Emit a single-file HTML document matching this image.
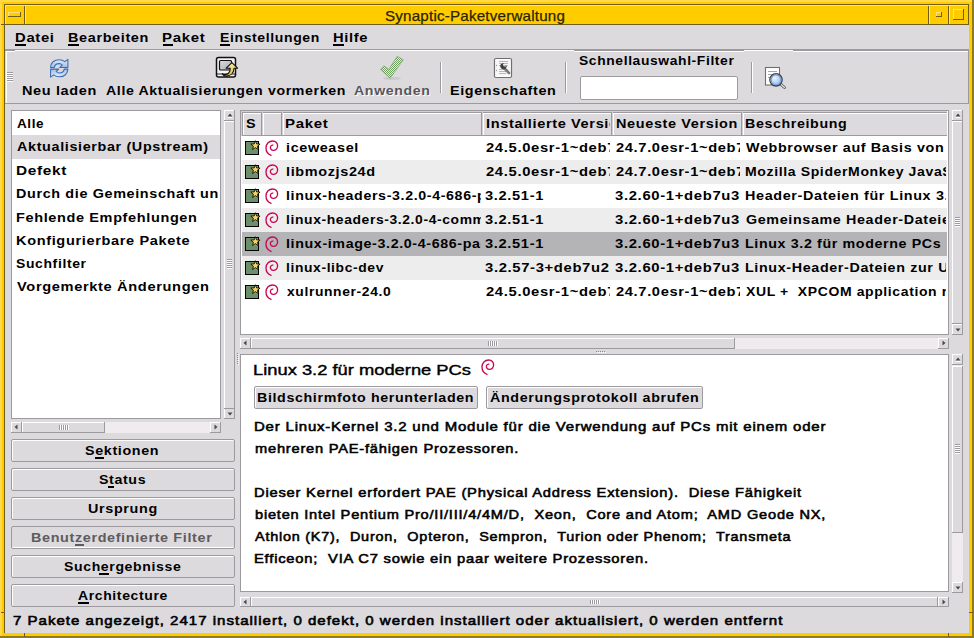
<!DOCTYPE html>
<html><head><meta charset="utf-8"><style>
html,body{margin:0;padding:0;width:974px;height:638px;overflow:hidden;background:#dcdadd}
body div{position:absolute;white-space:pre;line-height:normal}
body svg{position:absolute}
</style></head><body>
<div style="left:0px;top:0px;width:974px;height:638px;background:#ffd84f"></div>
<div style="left:2px;top:2px;width:970px;height:634px;background:#ffcc00"></div>
<div style="left:972px;top:0px;width:2px;height:638px;background:#8e7a22"></div>
<div style="left:0px;top:636px;width:974px;height:2px;background:#8e7a22"></div>
<div style="left:0px;top:0px;width:2px;height:636px;background:#ffd84f"></div>
<div style="left:4px;top:4px;width:965px;height:1px;background:#6f5e1c"></div>
<div style="left:4px;top:4px;width:1px;height:629px;background:#6f5e1c"></div>
<div style="left:5px;top:5px;width:964px;height:19px;background:#ffcc00"></div>
<div style="left:5px;top:5px;width:964px;height:1px;background:#ffe27a"></div>
<div style="left:5px;top:5px;width:1px;height:19px;background:#ffe27a"></div>
<div style="left:1px;top:24px;width:968px;height:1px;background:#6f5e1c"></div>
<div style="left:24px;top:6px;width:1px;height:18px;background:#6f5e1c"></div>
<div style="left:25px;top:6px;width:1px;height:18px;background:#ffe27a"></div>
<div style="left:8px;top:12px;width:13px;height:1px;background:#ffe27a"></div>
<div style="left:8px;top:12px;width:1px;height:5px;background:#ffe27a"></div>
<div style="left:8px;top:16px;width:13px;height:1px;background:#6f5e1c"></div>
<div style="left:20px;top:12px;width:1px;height:5px;background:#6f5e1c"></div>
<div style="left:928px;top:6px;width:1px;height:18px;background:#6f5e1c"></div>
<div style="left:929px;top:6px;width:1px;height:18px;background:#ffe27a"></div>
<div style="left:948px;top:6px;width:1px;height:18px;background:#6f5e1c"></div>
<div style="left:949px;top:6px;width:1px;height:18px;background:#ffe27a"></div>
<div style="left:968px;top:5px;width:1px;height:19px;background:#6f5e1c"></div>
<div style="left:936px;top:12px;width:6px;height:1px;background:#ffe27a"></div>
<div style="left:936px;top:12px;width:1px;height:5px;background:#ffe27a"></div>
<div style="left:936px;top:16px;width:6px;height:1px;background:#6f5e1c"></div>
<div style="left:941px;top:12px;width:1px;height:5px;background:#6f5e1c"></div>
<div style="left:953px;top:9px;width:11px;height:1px;background:#ffe27a"></div>
<div style="left:953px;top:9px;width:1px;height:11px;background:#ffe27a"></div>
<div style="left:953px;top:19px;width:11px;height:1px;background:#6f5e1c"></div>
<div style="left:963px;top:9px;width:1px;height:11px;background:#6f5e1c"></div>
<div style="left:1px;top:612px;width:4px;height:1px;background:#6f5e1c"></div>
<div style="left:969px;top:612px;width:4px;height:1px;background:#6f5e1c"></div>
<div style="left:24px;top:633px;width:1px;height:4px;background:#6f5e1c"></div>
<div style="left:948px;top:633px;width:1px;height:4px;background:#6f5e1c"></div>
<div style="left:5px;top:25px;width:964px;height:608px;background:#dcdadd"></div>
<div style="left:5px;top:49px;width:964px;height:1px;background:#9c9a9f"></div>
<div style="left:15px;top:44px;width:11px;height:2px;background:#000"></div>
<div style="left:68px;top:44px;width:11px;height:2px;background:#000"></div>
<div style="left:163px;top:44px;width:10px;height:2px;background:#000"></div>
<div style="left:220px;top:44px;width:10px;height:2px;background:#000"></div>
<div style="left:333px;top:44px;width:11px;height:2px;background:#000"></div>
<div style="left:5px;top:50px;width:964px;height:1px;background:#9c9a9f"></div>
<div style="left:15px;top:50px;width:559px;height:1px;background:#ffffff"></div>
<div style="left:744px;top:50px;width:49px;height:1px;background:#ffffff"></div>
<div style="left:6px;top:51px;width:9px;height:1px;background:#ffffff"></div>
<div style="left:574px;top:51px;width:170px;height:1px;background:#ffffff"></div>
<div style="left:793px;top:51px;width:175px;height:1px;background:#ffffff"></div>
<div style="left:6px;top:51px;width:1px;height:52px;background:#ffffff"></div>
<div style="left:968px;top:50px;width:1px;height:54px;background:#9c9a9f"></div>
<div style="left:5px;top:103px;width:964px;height:1px;background:#9c9a9f"></div>
<div style="left:7px;top:72px;width:6px;height:1px;background:#9c9a9f"></div>
<div style="left:7px;top:73px;width:6px;height:1px;background:#ffffff"></div>
<div style="left:7px;top:74px;width:6px;height:1px;background:#9c9a9f"></div>
<div style="left:7px;top:75px;width:6px;height:1px;background:#ffffff"></div>
<div style="left:7px;top:76px;width:6px;height:1px;background:#9c9a9f"></div>
<div style="left:7px;top:77px;width:6px;height:1px;background:#ffffff"></div>
<div style="left:7px;top:78px;width:6px;height:1px;background:#9c9a9f"></div>
<div style="left:7px;top:79px;width:6px;height:1px;background:#ffffff"></div>
<div style="left:7px;top:80px;width:6px;height:1px;background:#9c9a9f"></div>
<div style="left:7px;top:81px;width:6px;height:1px;background:#ffffff"></div>
<div style="left:440px;top:62px;width:1px;height:31px;background:#9c9a9f"></div>
<div style="left:441px;top:62px;width:1px;height:31px;background:#ffffff"></div>
<div style="left:565px;top:62px;width:1px;height:31px;background:#9c9a9f"></div>
<div style="left:566px;top:62px;width:1px;height:31px;background:#ffffff"></div>
<div style="left:751px;top:62px;width:1px;height:31px;background:#9c9a9f"></div>
<div style="left:752px;top:62px;width:1px;height:31px;background:#ffffff"></div>
<div style="left:580px;top:76px;width:158px;height:24px;background:#fff;border:1px solid #9c9a9f;box-sizing:border-box;border-radius:2px"></div>
<div style="left:11px;top:110px;width:210px;height:309px;background:#9c9a9f"></div>
<div style="left:12px;top:111px;width:208px;height:307px;background:#fff"></div>
<div style="left:12px;top:135px;width:208px;height:24px;background:#dcdadd"></div>
<div style="left:224px;top:110px;width:11px;height:309px;background:#efebef"></div>
<div style="left:224px;top:110px;width:11px;height:11px;background:#dcdadd"></div>
<div style="left:224px;top:110px;width:11px;height:1px;background:#ffffff"></div>
<div style="left:224px;top:110px;width:1px;height:11px;background:#ffffff"></div>
<div style="left:234px;top:110px;width:1px;height:11px;background:#9c9a9f"></div>
<div style="left:224px;top:120px;width:11px;height:1px;background:#9c9a9f"></div>
<svg style="left:227px;top:113px" width="7" height="5"><polygon points="0.5,3.5 5.5,3.5 3,0.5" fill="#4a484c"/><line x1="0.5" y1="4.5" x2="5.5" y2="4.5" stroke="#fff" stroke-width="1"/></svg>
<div style="left:224px;top:408px;width:11px;height:11px;background:#dcdadd"></div>
<div style="left:224px;top:408px;width:11px;height:1px;background:#ffffff"></div>
<div style="left:224px;top:408px;width:1px;height:11px;background:#ffffff"></div>
<div style="left:234px;top:408px;width:1px;height:11px;background:#9c9a9f"></div>
<div style="left:224px;top:418px;width:11px;height:1px;background:#9c9a9f"></div>
<svg style="left:227px;top:412px" width="7" height="5"><polygon points="0.5,0.5 5.5,0.5 3,3.5" fill="#4a484c"/></svg>
<div style="left:224px;top:121px;width:11px;height:288px;background:#dcdadd"></div>
<div style="left:224px;top:121px;width:11px;height:1px;background:#ffffff"></div>
<div style="left:224px;top:121px;width:1px;height:288px;background:#ffffff"></div>
<div style="left:234px;top:121px;width:1px;height:288px;background:#9c9a9f"></div>
<div style="left:224px;top:408px;width:11px;height:1px;background:#9c9a9f"></div>
<div style="left:227px;top:259px;width:5px;height:1px;background:#9c9a9f"></div>
<div style="left:227px;top:260px;width:5px;height:1px;background:#ffffff"></div>
<div style="left:227px;top:261px;width:5px;height:1px;background:#9c9a9f"></div>
<div style="left:227px;top:262px;width:5px;height:1px;background:#ffffff"></div>
<div style="left:227px;top:263px;width:5px;height:1px;background:#9c9a9f"></div>
<div style="left:227px;top:264px;width:5px;height:1px;background:#ffffff"></div>
<div style="left:227px;top:265px;width:5px;height:1px;background:#9c9a9f"></div>
<div style="left:227px;top:266px;width:5px;height:1px;background:#ffffff"></div>
<div style="left:227px;top:267px;width:5px;height:1px;background:#9c9a9f"></div>
<div style="left:227px;top:268px;width:5px;height:1px;background:#ffffff"></div>
<div style="left:11px;top:422px;width:210px;height:11px;background:#efebef"></div>
<div style="left:11px;top:422px;width:11px;height:11px;background:#dcdadd"></div>
<div style="left:11px;top:422px;width:11px;height:1px;background:#ffffff"></div>
<div style="left:11px;top:422px;width:1px;height:11px;background:#ffffff"></div>
<div style="left:21px;top:422px;width:1px;height:11px;background:#9c9a9f"></div>
<div style="left:11px;top:432px;width:11px;height:1px;background:#9c9a9f"></div>
<svg style="left:14px;top:424px" width="5" height="7"><polygon points="3.5,0.5 3.5,5.5 0.5,3" fill="#4a484c"/></svg>
<div style="left:210px;top:422px;width:11px;height:11px;background:#dcdadd"></div>
<div style="left:210px;top:422px;width:11px;height:1px;background:#ffffff"></div>
<div style="left:210px;top:422px;width:1px;height:11px;background:#ffffff"></div>
<div style="left:220px;top:422px;width:1px;height:11px;background:#9c9a9f"></div>
<div style="left:210px;top:432px;width:11px;height:1px;background:#9c9a9f"></div>
<svg style="left:214px;top:424px" width="5" height="7"><polygon points="0.5,0.5 0.5,5.5 3.5,3" fill="#4a484c"/></svg>
<div style="left:22px;top:422px;width:83px;height:11px;background:#dcdadd"></div>
<div style="left:22px;top:422px;width:83px;height:1px;background:#ffffff"></div>
<div style="left:22px;top:422px;width:1px;height:11px;background:#ffffff"></div>
<div style="left:104px;top:422px;width:1px;height:11px;background:#9c9a9f"></div>
<div style="left:22px;top:432px;width:83px;height:1px;background:#9c9a9f"></div>
<div style="left:59px;top:425px;width:1px;height:5px;background:#9c9a9f"></div>
<div style="left:60px;top:425px;width:1px;height:5px;background:#ffffff"></div>
<div style="left:61px;top:425px;width:1px;height:5px;background:#9c9a9f"></div>
<div style="left:62px;top:425px;width:1px;height:5px;background:#ffffff"></div>
<div style="left:63px;top:425px;width:1px;height:5px;background:#9c9a9f"></div>
<div style="left:64px;top:425px;width:1px;height:5px;background:#ffffff"></div>
<div style="left:65px;top:425px;width:1px;height:5px;background:#9c9a9f"></div>
<div style="left:66px;top:425px;width:1px;height:5px;background:#ffffff"></div>
<div style="left:67px;top:425px;width:1px;height:5px;background:#9c9a9f"></div>
<div style="left:68px;top:425px;width:1px;height:5px;background:#ffffff"></div>
<div style="left:237px;top:353px;width:1px;height:1px;background:#8a888c"></div>
<div style="left:238px;top:354px;width:1px;height:1px;background:#ffffff"></div>
<div style="left:237px;top:355px;width:1px;height:1px;background:#8a888c"></div>
<div style="left:238px;top:356px;width:1px;height:1px;background:#ffffff"></div>
<div style="left:237px;top:357px;width:1px;height:1px;background:#8a888c"></div>
<div style="left:238px;top:358px;width:1px;height:1px;background:#ffffff"></div>
<div style="left:237px;top:359px;width:1px;height:1px;background:#8a888c"></div>
<div style="left:238px;top:360px;width:1px;height:1px;background:#ffffff"></div>
<div style="left:237px;top:361px;width:1px;height:1px;background:#8a888c"></div>
<div style="left:238px;top:362px;width:1px;height:1px;background:#ffffff"></div>
<div style="left:237px;top:363px;width:1px;height:1px;background:#8a888c"></div>
<div style="left:238px;top:364px;width:1px;height:1px;background:#ffffff"></div>
<div style="left:240px;top:110px;width:709px;height:225px;background:#9c9a9f"></div>
<div style="left:241px;top:111px;width:707px;height:223px;background:#fff"></div>
<div style="left:241px;top:111px;width:707px;height:1px;background:#d2d0d4"></div>
<div style="left:241px;top:111px;width:1px;height:25px;background:#d2d0d4"></div>
<div style="left:947px;top:111px;width:1px;height:223px;background:#ffffff"></div>
<div style="left:242px;top:112px;width:20px;height:24px;background:#dcdadd"></div>
<div style="left:242px;top:112px;width:20px;height:1px;background:#9c9a9f"></div>
<div style="left:242px;top:113px;width:20px;height:1px;background:#ffffff"></div>
<div style="left:242px;top:112px;width:1px;height:24px;background:#9c9a9f"></div>
<div style="left:243px;top:113px;width:1px;height:22px;background:#ffffff"></div>
<div style="left:261px;top:112px;width:1px;height:24px;background:#9c9a9f"></div>
<div style="left:242px;top:135px;width:20px;height:1px;background:#9c9a9f"></div>
<div style="left:262px;top:112px;width:20px;height:24px;background:#dcdadd"></div>
<div style="left:262px;top:112px;width:20px;height:1px;background:#9c9a9f"></div>
<div style="left:262px;top:113px;width:20px;height:1px;background:#ffffff"></div>
<div style="left:262px;top:112px;width:1px;height:24px;background:#d2d0d4"></div>
<div style="left:263px;top:113px;width:1px;height:22px;background:#ffffff"></div>
<div style="left:281px;top:112px;width:1px;height:24px;background:#9c9a9f"></div>
<div style="left:262px;top:135px;width:20px;height:1px;background:#9c9a9f"></div>
<div style="left:282px;top:112px;width:200px;height:24px;background:#dcdadd"></div>
<div style="left:282px;top:112px;width:200px;height:1px;background:#9c9a9f"></div>
<div style="left:282px;top:113px;width:200px;height:1px;background:#ffffff"></div>
<div style="left:282px;top:112px;width:1px;height:24px;background:#d2d0d4"></div>
<div style="left:283px;top:113px;width:1px;height:22px;background:#ffffff"></div>
<div style="left:481px;top:112px;width:1px;height:24px;background:#9c9a9f"></div>
<div style="left:282px;top:135px;width:200px;height:1px;background:#9c9a9f"></div>
<div style="left:482px;top:112px;width:130px;height:24px;background:#dcdadd"></div>
<div style="left:482px;top:112px;width:130px;height:1px;background:#9c9a9f"></div>
<div style="left:482px;top:113px;width:130px;height:1px;background:#ffffff"></div>
<div style="left:482px;top:112px;width:1px;height:24px;background:#d2d0d4"></div>
<div style="left:483px;top:113px;width:1px;height:22px;background:#ffffff"></div>
<div style="left:611px;top:112px;width:1px;height:24px;background:#9c9a9f"></div>
<div style="left:482px;top:135px;width:130px;height:1px;background:#9c9a9f"></div>
<div style="left:612px;top:112px;width:130px;height:24px;background:#dcdadd"></div>
<div style="left:612px;top:112px;width:130px;height:1px;background:#9c9a9f"></div>
<div style="left:612px;top:113px;width:130px;height:1px;background:#ffffff"></div>
<div style="left:612px;top:112px;width:1px;height:24px;background:#d2d0d4"></div>
<div style="left:613px;top:113px;width:1px;height:22px;background:#ffffff"></div>
<div style="left:741px;top:112px;width:1px;height:24px;background:#9c9a9f"></div>
<div style="left:612px;top:135px;width:130px;height:1px;background:#9c9a9f"></div>
<div style="left:742px;top:112px;width:205px;height:24px;background:#dcdadd"></div>
<div style="left:742px;top:112px;width:205px;height:1px;background:#9c9a9f"></div>
<div style="left:742px;top:113px;width:205px;height:1px;background:#ffffff"></div>
<div style="left:742px;top:112px;width:1px;height:24px;background:#d2d0d4"></div>
<div style="left:743px;top:113px;width:1px;height:22px;background:#ffffff"></div>
<div style="left:742px;top:135px;width:205px;height:1px;background:#9c9a9f"></div>
<svg style="left:245px;top:140px" width="17" height="16" viewBox="0 -1 17 16"><rect x="0.5" y="0.5" width="13" height="13" fill="#7fa27b" stroke="#000" stroke-width="1"/><path d="M1,1 L9,1 L9,9 L13,9 L13,13 L1,13 Z" fill="#6b8f67"/><polygon points="10.40,-0.30 11.63,2.90 15.06,3.09 12.40,5.25 13.28,8.56 10.40,6.70 7.52,8.56 8.40,5.25 5.74,3.09 9.17,2.90" fill="#f2d55c" stroke="#111" stroke-width="0.9" stroke-linejoin="round"/></svg>
<svg style="left:265px;top:140px" width="14" height="17"><path d="M6.5,15.6 C2.5,14.2 0.9,11 1.0,7.8 C1.2,3.6 4.2,1.0 7.6,1.0 C10.8,1.0 12.8,3.4 12.6,6.2 C12.4,9.0 10.2,10.6 8.2,10.4 C6.4,10.2 5.2,8.8 5.4,7.2 C5.6,5.6 7.0,4.8 8.4,5.2" fill="none" stroke="#c70a50" stroke-width="1.35"/></svg>
<div style="left:242px;top:160px;width:705px;height:24px;background:#ededed"></div>
<svg style="left:245px;top:164px" width="17" height="16" viewBox="0 -1 17 16"><rect x="0.5" y="0.5" width="13" height="13" fill="#7fa27b" stroke="#000" stroke-width="1"/><path d="M1,1 L9,1 L9,9 L13,9 L13,13 L1,13 Z" fill="#6b8f67"/><polygon points="10.40,-0.30 11.63,2.90 15.06,3.09 12.40,5.25 13.28,8.56 10.40,6.70 7.52,8.56 8.40,5.25 5.74,3.09 9.17,2.90" fill="#f2d55c" stroke="#111" stroke-width="0.9" stroke-linejoin="round"/></svg>
<svg style="left:265px;top:164px" width="14" height="17"><path d="M6.5,15.6 C2.5,14.2 0.9,11 1.0,7.8 C1.2,3.6 4.2,1.0 7.6,1.0 C10.8,1.0 12.8,3.4 12.6,6.2 C12.4,9.0 10.2,10.6 8.2,10.4 C6.4,10.2 5.2,8.8 5.4,7.2 C5.6,5.6 7.0,4.8 8.4,5.2" fill="none" stroke="#c70a50" stroke-width="1.35"/></svg>
<svg style="left:245px;top:188px" width="17" height="16" viewBox="0 -1 17 16"><rect x="0.5" y="0.5" width="13" height="13" fill="#7fa27b" stroke="#000" stroke-width="1"/><path d="M1,1 L9,1 L9,9 L13,9 L13,13 L1,13 Z" fill="#6b8f67"/><polygon points="10.40,-0.30 11.63,2.90 15.06,3.09 12.40,5.25 13.28,8.56 10.40,6.70 7.52,8.56 8.40,5.25 5.74,3.09 9.17,2.90" fill="#f2d55c" stroke="#111" stroke-width="0.9" stroke-linejoin="round"/></svg>
<svg style="left:265px;top:188px" width="14" height="17"><path d="M6.5,15.6 C2.5,14.2 0.9,11 1.0,7.8 C1.2,3.6 4.2,1.0 7.6,1.0 C10.8,1.0 12.8,3.4 12.6,6.2 C12.4,9.0 10.2,10.6 8.2,10.4 C6.4,10.2 5.2,8.8 5.4,7.2 C5.6,5.6 7.0,4.8 8.4,5.2" fill="none" stroke="#c70a50" stroke-width="1.35"/></svg>
<div style="left:242px;top:208px;width:705px;height:24px;background:#ededed"></div>
<svg style="left:245px;top:212px" width="17" height="16" viewBox="0 -1 17 16"><rect x="0.5" y="0.5" width="13" height="13" fill="#7fa27b" stroke="#000" stroke-width="1"/><path d="M1,1 L9,1 L9,9 L13,9 L13,13 L1,13 Z" fill="#6b8f67"/><polygon points="10.40,-0.30 11.63,2.90 15.06,3.09 12.40,5.25 13.28,8.56 10.40,6.70 7.52,8.56 8.40,5.25 5.74,3.09 9.17,2.90" fill="#f2d55c" stroke="#111" stroke-width="0.9" stroke-linejoin="round"/></svg>
<svg style="left:265px;top:212px" width="14" height="17"><path d="M6.5,15.6 C2.5,14.2 0.9,11 1.0,7.8 C1.2,3.6 4.2,1.0 7.6,1.0 C10.8,1.0 12.8,3.4 12.6,6.2 C12.4,9.0 10.2,10.6 8.2,10.4 C6.4,10.2 5.2,8.8 5.4,7.2 C5.6,5.6 7.0,4.8 8.4,5.2" fill="none" stroke="#c70a50" stroke-width="1.35"/></svg>
<div style="left:242px;top:232px;width:705px;height:24px;background:#b4b3b6"></div>
<svg style="left:245px;top:236px" width="17" height="16" viewBox="0 -1 17 16"><rect x="0.5" y="0.5" width="13" height="13" fill="#7fa27b" stroke="#000" stroke-width="1"/><path d="M1,1 L9,1 L9,9 L13,9 L13,13 L1,13 Z" fill="#6b8f67"/><polygon points="10.40,-0.30 11.63,2.90 15.06,3.09 12.40,5.25 13.28,8.56 10.40,6.70 7.52,8.56 8.40,5.25 5.74,3.09 9.17,2.90" fill="#f2d55c" stroke="#111" stroke-width="0.9" stroke-linejoin="round"/></svg>
<svg style="left:265px;top:236px" width="14" height="17"><path d="M6.5,15.6 C2.5,14.2 0.9,11 1.0,7.8 C1.2,3.6 4.2,1.0 7.6,1.0 C10.8,1.0 12.8,3.4 12.6,6.2 C12.4,9.0 10.2,10.6 8.2,10.4 C6.4,10.2 5.2,8.8 5.4,7.2 C5.6,5.6 7.0,4.8 8.4,5.2" fill="none" stroke="#c70a50" stroke-width="1.35"/></svg>
<div style="left:242px;top:256px;width:705px;height:24px;background:#ededed"></div>
<svg style="left:245px;top:260px" width="17" height="16" viewBox="0 -1 17 16"><rect x="0.5" y="0.5" width="13" height="13" fill="#7fa27b" stroke="#000" stroke-width="1"/><path d="M1,1 L9,1 L9,9 L13,9 L13,13 L1,13 Z" fill="#6b8f67"/><polygon points="10.40,-0.30 11.63,2.90 15.06,3.09 12.40,5.25 13.28,8.56 10.40,6.70 7.52,8.56 8.40,5.25 5.74,3.09 9.17,2.90" fill="#f2d55c" stroke="#111" stroke-width="0.9" stroke-linejoin="round"/></svg>
<svg style="left:265px;top:260px" width="14" height="17"><path d="M6.5,15.6 C2.5,14.2 0.9,11 1.0,7.8 C1.2,3.6 4.2,1.0 7.6,1.0 C10.8,1.0 12.8,3.4 12.6,6.2 C12.4,9.0 10.2,10.6 8.2,10.4 C6.4,10.2 5.2,8.8 5.4,7.2 C5.6,5.6 7.0,4.8 8.4,5.2" fill="none" stroke="#c70a50" stroke-width="1.35"/></svg>
<svg style="left:245px;top:284px" width="17" height="16" viewBox="0 -1 17 16"><rect x="0.5" y="0.5" width="13" height="13" fill="#7fa27b" stroke="#000" stroke-width="1"/><path d="M1,1 L9,1 L9,9 L13,9 L13,13 L1,13 Z" fill="#6b8f67"/><polygon points="10.40,-0.30 11.63,2.90 15.06,3.09 12.40,5.25 13.28,8.56 10.40,6.70 7.52,8.56 8.40,5.25 5.74,3.09 9.17,2.90" fill="#f2d55c" stroke="#111" stroke-width="0.9" stroke-linejoin="round"/></svg>
<svg style="left:265px;top:284px" width="14" height="17"><path d="M6.5,15.6 C2.5,14.2 0.9,11 1.0,7.8 C1.2,3.6 4.2,1.0 7.6,1.0 C10.8,1.0 12.8,3.4 12.6,6.2 C12.4,9.0 10.2,10.6 8.2,10.4 C6.4,10.2 5.2,8.8 5.4,7.2 C5.6,5.6 7.0,4.8 8.4,5.2" fill="none" stroke="#c70a50" stroke-width="1.35"/></svg>
<div style="left:952px;top:110px;width:11px;height:225px;background:#efebef"></div>
<div style="left:952px;top:110px;width:11px;height:11px;background:#dcdadd"></div>
<div style="left:952px;top:110px;width:11px;height:1px;background:#ffffff"></div>
<div style="left:952px;top:110px;width:1px;height:11px;background:#ffffff"></div>
<div style="left:962px;top:110px;width:1px;height:11px;background:#9c9a9f"></div>
<div style="left:952px;top:120px;width:11px;height:1px;background:#9c9a9f"></div>
<svg style="left:955px;top:113px" width="7" height="5"><polygon points="0.5,3.5 5.5,3.5 3,0.5" fill="#4a484c"/><line x1="0.5" y1="4.5" x2="5.5" y2="4.5" stroke="#fff" stroke-width="1"/></svg>
<div style="left:952px;top:324px;width:11px;height:11px;background:#dcdadd"></div>
<div style="left:952px;top:324px;width:11px;height:1px;background:#ffffff"></div>
<div style="left:952px;top:324px;width:1px;height:11px;background:#ffffff"></div>
<div style="left:962px;top:324px;width:1px;height:11px;background:#9c9a9f"></div>
<div style="left:952px;top:334px;width:11px;height:1px;background:#9c9a9f"></div>
<svg style="left:955px;top:328px" width="7" height="5"><polygon points="0.5,0.5 5.5,0.5 3,3.5" fill="#4a484c"/></svg>
<div style="left:952px;top:121px;width:11px;height:203px;background:#dcdadd"></div>
<div style="left:952px;top:121px;width:11px;height:1px;background:#ffffff"></div>
<div style="left:952px;top:121px;width:1px;height:203px;background:#ffffff"></div>
<div style="left:962px;top:121px;width:1px;height:203px;background:#9c9a9f"></div>
<div style="left:952px;top:323px;width:11px;height:1px;background:#9c9a9f"></div>
<div style="left:955px;top:217px;width:5px;height:1px;background:#9c9a9f"></div>
<div style="left:955px;top:218px;width:5px;height:1px;background:#ffffff"></div>
<div style="left:955px;top:219px;width:5px;height:1px;background:#9c9a9f"></div>
<div style="left:955px;top:220px;width:5px;height:1px;background:#ffffff"></div>
<div style="left:955px;top:221px;width:5px;height:1px;background:#9c9a9f"></div>
<div style="left:955px;top:222px;width:5px;height:1px;background:#ffffff"></div>
<div style="left:955px;top:223px;width:5px;height:1px;background:#9c9a9f"></div>
<div style="left:955px;top:224px;width:5px;height:1px;background:#ffffff"></div>
<div style="left:955px;top:225px;width:5px;height:1px;background:#9c9a9f"></div>
<div style="left:955px;top:226px;width:5px;height:1px;background:#ffffff"></div>
<div style="left:240px;top:338px;width:709px;height:11px;background:#efebef"></div>
<div style="left:240px;top:338px;width:11px;height:11px;background:#dcdadd"></div>
<div style="left:240px;top:338px;width:11px;height:1px;background:#ffffff"></div>
<div style="left:240px;top:338px;width:1px;height:11px;background:#ffffff"></div>
<div style="left:250px;top:338px;width:1px;height:11px;background:#9c9a9f"></div>
<div style="left:240px;top:348px;width:11px;height:1px;background:#9c9a9f"></div>
<svg style="left:243px;top:340px" width="5" height="7"><polygon points="3.5,0.5 3.5,5.5 0.5,3" fill="#4a484c"/></svg>
<div style="left:938px;top:338px;width:11px;height:11px;background:#dcdadd"></div>
<div style="left:938px;top:338px;width:11px;height:1px;background:#ffffff"></div>
<div style="left:938px;top:338px;width:1px;height:11px;background:#ffffff"></div>
<div style="left:948px;top:338px;width:1px;height:11px;background:#9c9a9f"></div>
<div style="left:938px;top:348px;width:11px;height:1px;background:#9c9a9f"></div>
<svg style="left:942px;top:340px" width="5" height="7"><polygon points="0.5,0.5 0.5,5.5 3.5,3" fill="#4a484c"/></svg>
<div style="left:251px;top:338px;width:484px;height:11px;background:#dcdadd"></div>
<div style="left:251px;top:338px;width:484px;height:1px;background:#ffffff"></div>
<div style="left:251px;top:338px;width:1px;height:11px;background:#ffffff"></div>
<div style="left:734px;top:338px;width:1px;height:11px;background:#9c9a9f"></div>
<div style="left:251px;top:348px;width:484px;height:1px;background:#9c9a9f"></div>
<div style="left:488px;top:341px;width:1px;height:5px;background:#9c9a9f"></div>
<div style="left:489px;top:341px;width:1px;height:5px;background:#ffffff"></div>
<div style="left:490px;top:341px;width:1px;height:5px;background:#9c9a9f"></div>
<div style="left:491px;top:341px;width:1px;height:5px;background:#ffffff"></div>
<div style="left:492px;top:341px;width:1px;height:5px;background:#9c9a9f"></div>
<div style="left:493px;top:341px;width:1px;height:5px;background:#ffffff"></div>
<div style="left:494px;top:341px;width:1px;height:5px;background:#9c9a9f"></div>
<div style="left:495px;top:341px;width:1px;height:5px;background:#ffffff"></div>
<div style="left:496px;top:341px;width:1px;height:5px;background:#9c9a9f"></div>
<div style="left:497px;top:341px;width:1px;height:5px;background:#ffffff"></div>
<div style="left:596px;top:351px;width:1px;height:1px;background:#8a888c"></div>
<div style="left:597px;top:352px;width:1px;height:1px;background:#ffffff"></div>
<div style="left:598px;top:351px;width:1px;height:1px;background:#8a888c"></div>
<div style="left:599px;top:352px;width:1px;height:1px;background:#ffffff"></div>
<div style="left:600px;top:351px;width:1px;height:1px;background:#8a888c"></div>
<div style="left:601px;top:352px;width:1px;height:1px;background:#ffffff"></div>
<div style="left:602px;top:351px;width:1px;height:1px;background:#8a888c"></div>
<div style="left:603px;top:352px;width:1px;height:1px;background:#ffffff"></div>
<div style="left:604px;top:351px;width:1px;height:1px;background:#8a888c"></div>
<div style="left:605px;top:352px;width:1px;height:1px;background:#ffffff"></div>
<div style="left:240px;top:354px;width:709px;height:238px;background:#9c9a9f"></div>
<div style="left:241px;top:355px;width:707px;height:236px;background:#fff"></div>
<svg style="left:481px;top:359px" width="16" height="17"><path d="M6.5,15.6 C2.5,14.2 0.9,11 1.0,7.8 C1.2,3.6 4.2,1.0 7.6,1.0 C10.8,1.0 12.8,3.4 12.6,6.2 C12.4,9.0 10.2,10.6 8.2,10.4 C6.4,10.2 5.2,8.8 5.4,7.2 C5.6,5.6 7.0,4.8 8.4,5.2" fill="none" stroke="#c70a50" stroke-width="1.35"/></svg>
<div style="left:254px;top:386px;width:224px;height:23px;background:#dcdadd;border:1px solid #9c9a9f;box-sizing:border-box;border-radius:2px;box-shadow:inset 1px 1px 0 #fff"></div>
<div style="left:486px;top:386px;width:217px;height:23px;background:#dcdadd;border:1px solid #9c9a9f;box-sizing:border-box;border-radius:2px;box-shadow:inset 1px 1px 0 #fff"></div>
<div style="left:952px;top:354px;width:11px;height:239px;background:#efebef"></div>
<div style="left:952px;top:354px;width:11px;height:11px;background:#dcdadd"></div>
<div style="left:952px;top:354px;width:11px;height:1px;background:#ffffff"></div>
<div style="left:952px;top:354px;width:1px;height:11px;background:#ffffff"></div>
<div style="left:962px;top:354px;width:1px;height:11px;background:#9c9a9f"></div>
<div style="left:952px;top:364px;width:11px;height:1px;background:#9c9a9f"></div>
<svg style="left:955px;top:357px" width="7" height="5"><polygon points="0.5,3.5 5.5,3.5 3,0.5" fill="#4a484c"/><line x1="0.5" y1="4.5" x2="5.5" y2="4.5" stroke="#fff" stroke-width="1"/></svg>
<div style="left:952px;top:582px;width:11px;height:11px;background:#dcdadd"></div>
<div style="left:952px;top:582px;width:11px;height:1px;background:#ffffff"></div>
<div style="left:952px;top:582px;width:1px;height:11px;background:#ffffff"></div>
<div style="left:962px;top:582px;width:1px;height:11px;background:#9c9a9f"></div>
<div style="left:952px;top:592px;width:11px;height:1px;background:#9c9a9f"></div>
<svg style="left:955px;top:586px" width="7" height="5"><polygon points="0.5,0.5 5.5,0.5 3,3.5" fill="#4a484c"/></svg>
<div style="left:952px;top:366px;width:11px;height:167px;background:#dcdadd"></div>
<div style="left:952px;top:366px;width:11px;height:1px;background:#ffffff"></div>
<div style="left:952px;top:366px;width:1px;height:167px;background:#ffffff"></div>
<div style="left:962px;top:366px;width:1px;height:167px;background:#9c9a9f"></div>
<div style="left:952px;top:532px;width:11px;height:1px;background:#9c9a9f"></div>
<div style="left:955px;top:444px;width:5px;height:1px;background:#9c9a9f"></div>
<div style="left:955px;top:445px;width:5px;height:1px;background:#ffffff"></div>
<div style="left:955px;top:446px;width:5px;height:1px;background:#9c9a9f"></div>
<div style="left:955px;top:447px;width:5px;height:1px;background:#ffffff"></div>
<div style="left:955px;top:448px;width:5px;height:1px;background:#9c9a9f"></div>
<div style="left:955px;top:449px;width:5px;height:1px;background:#ffffff"></div>
<div style="left:955px;top:450px;width:5px;height:1px;background:#9c9a9f"></div>
<div style="left:955px;top:451px;width:5px;height:1px;background:#ffffff"></div>
<div style="left:955px;top:452px;width:5px;height:1px;background:#9c9a9f"></div>
<div style="left:955px;top:453px;width:5px;height:1px;background:#ffffff"></div>
<div style="left:240px;top:597px;width:709px;height:10px;background:#efebef"></div>
<div style="left:240px;top:597px;width:11px;height:10px;background:#dcdadd"></div>
<div style="left:240px;top:597px;width:11px;height:1px;background:#ffffff"></div>
<div style="left:240px;top:597px;width:1px;height:10px;background:#ffffff"></div>
<div style="left:250px;top:597px;width:1px;height:10px;background:#9c9a9f"></div>
<div style="left:240px;top:606px;width:11px;height:1px;background:#9c9a9f"></div>
<svg style="left:243px;top:599px" width="5" height="7"><polygon points="3.5,0.5 3.5,5.5 0.5,3" fill="#4a484c"/></svg>
<div style="left:938px;top:597px;width:11px;height:10px;background:#dcdadd"></div>
<div style="left:938px;top:597px;width:11px;height:1px;background:#ffffff"></div>
<div style="left:938px;top:597px;width:1px;height:10px;background:#ffffff"></div>
<div style="left:948px;top:597px;width:1px;height:10px;background:#9c9a9f"></div>
<div style="left:938px;top:606px;width:11px;height:1px;background:#9c9a9f"></div>
<svg style="left:942px;top:599px" width="5" height="7"><polygon points="0.5,0.5 0.5,5.5 3.5,3" fill="#4a484c"/></svg>
<div style="left:251px;top:597px;width:687px;height:10px;background:#dcdadd"></div>
<div style="left:251px;top:597px;width:687px;height:1px;background:#ffffff"></div>
<div style="left:251px;top:597px;width:1px;height:10px;background:#ffffff"></div>
<div style="left:937px;top:597px;width:1px;height:10px;background:#9c9a9f"></div>
<div style="left:251px;top:606px;width:687px;height:1px;background:#9c9a9f"></div>
<div style="left:590px;top:600px;width:1px;height:4px;background:#9c9a9f"></div>
<div style="left:591px;top:600px;width:1px;height:4px;background:#ffffff"></div>
<div style="left:592px;top:600px;width:1px;height:4px;background:#9c9a9f"></div>
<div style="left:593px;top:600px;width:1px;height:4px;background:#ffffff"></div>
<div style="left:594px;top:600px;width:1px;height:4px;background:#9c9a9f"></div>
<div style="left:595px;top:600px;width:1px;height:4px;background:#ffffff"></div>
<div style="left:596px;top:600px;width:1px;height:4px;background:#9c9a9f"></div>
<div style="left:597px;top:600px;width:1px;height:4px;background:#ffffff"></div>
<div style="left:598px;top:600px;width:1px;height:4px;background:#9c9a9f"></div>
<div style="left:599px;top:600px;width:1px;height:4px;background:#ffffff"></div>
<div style="left:11px;top:439px;width:224px;height:23px;background:#dcdadd;border:1px solid #9c9a9f;box-sizing:border-box;border-radius:2px;box-shadow:inset 1px 1px 0 #fff"></div>
<div style="left:95px;top:457px;width:9px;height:2px;background:#000"></div>
<div style="left:11px;top:468px;width:224px;height:23px;background:#dcdadd;border:1px solid #9c9a9f;box-sizing:border-box;border-radius:2px;box-shadow:inset 1px 1px 0 #fff"></div>
<div style="left:108px;top:486px;width:6px;height:2px;background:#000"></div>
<div style="left:11px;top:497px;width:224px;height:23px;background:#dcdadd;border:1px solid #9c9a9f;box-sizing:border-box;border-radius:2px;box-shadow:inset 1px 1px 0 #fff"></div>
<div style="left:11px;top:526px;width:224px;height:23px;background:#dcdadd;border:1px solid #9c9a9f;box-sizing:border-box;border-radius:2px;box-shadow:inset 0 -1px 0 #fff"></div>
<div style="left:75px;top:544px;width:9px;height:2px;background:#5e5c60"></div>
<div style="left:11px;top:555px;width:224px;height:23px;background:#dcdadd;border:1px solid #9c9a9f;box-sizing:border-box;border-radius:2px;box-shadow:inset 1px 1px 0 #fff"></div>
<div style="left:99px;top:573px;width:10px;height:2px;background:#000"></div>
<div style="left:11px;top:584px;width:224px;height:23px;background:#dcdadd;border:1px solid #9c9a9f;box-sizing:border-box;border-radius:2px;box-shadow:inset 1px 1px 0 #fff"></div>
<div style="left:78px;top:602px;width:11px;height:2px;background:#000"></div>
<svg style="left:49px;top:58px" width="21" height="21" viewBox="-1 -1 21 21">
<defs><linearGradient id="gb" x1="0" y1="0" x2="0" y2="1"><stop offset="0" stop-color="#e6eef9"/><stop offset="1" stop-color="#9fbbe4"/></linearGradient></defs>
<g id="ra"><path d="M0.6,8.4 C0.6,3.6 4.4,0.7 9.2,0.7 C11.6,0.7 13.4,1.5 14.9,2.7 L17.9,0.4 L17.9,8.4 L9.8,8.4 L12.3,6.0 C11.5,5.2 10.4,4.6 9.2,4.6 C6.6,4.6 4.6,6.2 4.3,8.4 Z" fill="url(#gb)" stroke="#3a6cb6" stroke-width="1.05" stroke-linejoin="round"/></g>
<use href="#ra" transform="rotate(180 9.25 9.25)"/>
</svg>
<svg style="left:215px;top:56px" width="25" height="23" viewBox="0 0 25 23">
<defs><linearGradient id="gs" x1="0" y1="0" x2="1" y2="1"><stop offset="0" stop-color="#d8dcdc"/><stop offset="1" stop-color="#a8acae"/></linearGradient>
<linearGradient id="gy" x1="0" y1="0" x2="0" y2="1"><stop offset="0" stop-color="#f8e9a0"/><stop offset="1" stop-color="#e0bf50"/></linearGradient></defs>
<rect x="1.5" y="1.5" width="19" height="19.5" rx="2" fill="#f4f4f4" stroke="#111" stroke-width="1.5"/>
<rect x="4.5" y="4.5" width="12" height="9.5" rx="1" fill="url(#gs)" stroke="#111" stroke-width="1.2"/>
<line x1="2" y1="18" x2="20" y2="18" stroke="#222" stroke-width="1"/>
<path d="M7.3,17.6 C9.5,19.4 13.6,18.6 14.8,15.2 L15.2,12.2 L11.2,12.2 L16.9,6.6 L22.6,12.2 L19,12.2 C18.8,16.6 16,19.9 11.5,20.1 C9.4,20.1 7.9,19.2 7.3,17.6 Z" fill="url(#gy)" stroke="#111" stroke-width="1.1" stroke-linejoin="round"/>
</svg>
<svg style="left:379px;top:55px" width="26" height="25" viewBox="379 55 26 25">
<defs><pattern id="st" width="2" height="2" patternUnits="userSpaceOnUse"><rect width="2" height="2" fill="#e6ece2"/><rect width="1" height="1" fill="#6f9f5f"/><rect x="1" y="1" width="1" height="1" fill="#6f9f5f"/></pattern></defs>
<ellipse cx="392" cy="78.3" rx="9" ry="1.6" fill="#b9b7ba" opacity="0.5"/><polygon points="380.5,69.5 383.8,65.8 388.8,69.2 397.2,56.2 403.3,59.8 390.2,78.2" fill="url(#st)" stroke="#5f9a4c" stroke-width="0.7" stroke-opacity="0.7"/>
</svg>
<svg style="left:493px;top:57px" width="21" height="23" viewBox="0 0 21 23">
<rect x="1.5" y="1.5" width="17" height="19" rx="1.5" fill="#fff" stroke="#6e6e6e" stroke-width="1.2"/>
<rect x="3" y="3" width="14" height="16" fill="#f6f6f6"/>
<g stroke="#b8b8b8" stroke-width="1"><line x1="6" y1="4.5" x2="15" y2="4.5"/><line x1="6" y1="6.5" x2="15" y2="6.5"/><line x1="6" y1="8.5" x2="15" y2="8.5"/><line x1="6" y1="12.5" x2="15" y2="12.5"/><line x1="6" y1="14.5" x2="15" y2="14.5"/><line x1="6" y1="16.5" x2="13" y2="16.5"/></g>
<line x1="10.5" y1="10.5" x2="16" y2="16" stroke="#7a7a7a" stroke-width="2.6" stroke-linecap="round"/>
<path d="M7.2,9.2 C7.2,7.2 9,5.8 11,6.2 L9.8,7.8 L10.6,9.6 L12.6,9.6 L13.6,8.2 C14.2,10.2 12.6,12.4 10.4,12.2 C8.6,12 7.2,10.8 7.2,9.2 Z" fill="#404040"/>
<circle cx="3.5" cy="8.5" r="0.7" fill="#999"/><circle cx="3.5" cy="13.5" r="0.7" fill="#999"/>
</svg>
<svg style="left:764px;top:66px" width="24" height="24" viewBox="0 0 24 24">
<defs><radialGradient id="gl" cx="0.4" cy="0.35" r="0.7"><stop offset="0" stop-color="#eef4fc"/><stop offset="1" stop-color="#8ab2e6"/></radialGradient></defs>
<rect x="1.5" y="1.5" width="14" height="17.5" fill="#fff" stroke="#707070" stroke-width="1.1"/>
<g stroke="#a8a8a8" stroke-width="1"><line x1="4" y1="5.5" x2="13" y2="5.5"/><line x1="4" y1="8.5" x2="10" y2="8.5"/><line x1="4" y1="11.5" x2="7" y2="11.5"/></g>
<line x1="16.5" y1="18" x2="20.5" y2="21.5" stroke="#555" stroke-width="2.8" stroke-linecap="round"/>
<line x1="16.5" y1="18" x2="20.5" y2="21.5" stroke="#e0e0e0" stroke-width="1.2" stroke-linecap="round"/>
<circle cx="12" cy="13.8" r="6.2" fill="url(#gl)" stroke="#404040" stroke-width="1.3"/><circle cx="12" cy="13.8" r="4.9" fill="none" stroke="#6d9ee0" stroke-width="1.1"/>
</svg>
<div style='left:385.46px;top:7.60px;transform:scaleX(1.0439);transform-origin:0 0;font-family:&quot;Liberation Sans&quot;,sans-serif;font-size:14.5px;font-weight:normal;letter-spacing:0.2px;-webkit-text-stroke:0.25px currentColor;color:#2b2300;'>Synaptic-Paketverwaltung</div>
<div style='left:14.60px;top:30.00px;transform:scaleX(1.1000);transform-origin:0 0;font-family:&quot;Liberation Sans&quot;,sans-serif;font-size:13.5px;font-weight:bold;letter-spacing:0.6px;color:#000;'>Datei</div>
<div style='left:67.83px;top:30.00px;transform:scaleX(1.0689);transform-origin:0 0;font-family:&quot;Liberation Sans&quot;,sans-serif;font-size:13.5px;font-weight:bold;letter-spacing:0.6px;color:#000;'>Bearbeiten</div>
<div style='left:162.49px;top:30.00px;transform:scaleX(1.1108);transform-origin:0 0;font-family:&quot;Liberation Sans&quot;,sans-serif;font-size:13.5px;font-weight:bold;letter-spacing:0.6px;color:#000;'>Paket</div>
<div style='left:219.66px;top:30.00px;transform:scaleX(1.0372);transform-origin:0 0;font-family:&quot;Liberation Sans&quot;,sans-serif;font-size:13.5px;font-weight:bold;letter-spacing:0.6px;color:#000;'>Einstellungen</div>
<div style='left:332.71px;top:30.00px;transform:scaleX(1.0900);transform-origin:0 0;font-family:&quot;Liberation Sans&quot;,sans-serif;font-size:13.5px;font-weight:bold;letter-spacing:0.6px;color:#000;'>Hilfe</div>
<div style='left:21.73px;top:83.00px;transform:scaleX(1.0721);transform-origin:0 0;font-family:&quot;Liberation Sans&quot;,sans-serif;font-size:13.5px;font-weight:bold;letter-spacing:0.6px;color:#000;'>Neu laden</div>
<div style='left:106.00px;top:83.00px;transform:scaleX(1.0482);transform-origin:0 0;font-family:&quot;Liberation Sans&quot;,sans-serif;font-size:13.5px;font-weight:bold;letter-spacing:0.6px;color:#000;'>Alle Aktualisierungen vormerken</div>
<div style='left:354.00px;top:83.00px;transform:scaleX(1.0486);transform-origin:0 0;font-family:&quot;Liberation Sans&quot;,sans-serif;font-size:13.5px;font-weight:bold;letter-spacing:0.6px;color:#58565a;text-shadow:1px 1px 0 #fff;'>Anwenden</div>
<div style='left:450.24px;top:83.00px;transform:scaleX(1.0633);transform-origin:0 0;font-family:&quot;Liberation Sans&quot;,sans-serif;font-size:13.5px;font-weight:bold;letter-spacing:0.6px;color:#000;'>Eigenschaften</div>
<div style='left:579.47px;top:53.00px;transform:scaleX(1.0267);transform-origin:0 0;font-family:&quot;Liberation Sans&quot;,sans-serif;font-size:13.5px;font-weight:bold;letter-spacing:0.6px;color:#000;'>Schnellauswahl-Filter</div>
<div style='left:12px;top:111px;width:207px;height:306px;overflow:hidden'><div style='left:5.00px;top:5.00px;font-family:&quot;Liberation Sans&quot;,sans-serif;font-size:13.5px;font-weight:bold;letter-spacing:0.6px;color:#000;'>Alle</div></div>
<div style='left:12px;top:111px;width:207px;height:306px;overflow:hidden'><div style='left:5.00px;top:28.00px;transform:scaleX(1.0648);transform-origin:0 0;font-family:&quot;Liberation Sans&quot;,sans-serif;font-size:13.5px;font-weight:bold;letter-spacing:0.6px;color:#000;'>Aktualisierbar (Upstream)</div></div>
<div style='left:12px;top:111px;width:207px;height:306px;overflow:hidden'><div style='left:3.86px;top:52.00px;transform:scaleX(1.1395);transform-origin:0 0;font-family:&quot;Liberation Sans&quot;,sans-serif;font-size:13.5px;font-weight:bold;letter-spacing:0.6px;color:#000;'>Defekt</div></div>
<div style='left:12px;top:111px;width:207px;height:306px;overflow:hidden'><div style='left:3.93px;top:75.00px;transform:scaleX(1.0651);transform-origin:0 0;font-family:&quot;Liberation Sans&quot;,sans-serif;font-size:13.5px;font-weight:bold;letter-spacing:0.6px;color:#000;'>Durch die Gemeinschaft unterstützt</div></div>
<div style='left:12px;top:111px;width:207px;height:306px;overflow:hidden'><div style='left:3.93px;top:99.00px;transform:scaleX(1.0719);transform-origin:0 0;font-family:&quot;Liberation Sans&quot;,sans-serif;font-size:13.5px;font-weight:bold;letter-spacing:0.6px;color:#000;'>Fehlende Empfehlungen</div></div>
<div style='left:12px;top:111px;width:207px;height:306px;overflow:hidden'><div style='left:3.92px;top:122.00px;transform:scaleX(1.0769);transform-origin:0 0;font-family:&quot;Liberation Sans&quot;,sans-serif;font-size:13.5px;font-weight:bold;letter-spacing:0.6px;color:#000;'>Konfigurierbare Pakete</div></div>
<div style='left:12px;top:111px;width:207px;height:306px;overflow:hidden'><div style='left:3.97px;top:145.00px;transform:scaleX(1.0343);transform-origin:0 0;font-family:&quot;Liberation Sans&quot;,sans-serif;font-size:13.5px;font-weight:bold;letter-spacing:0.6px;color:#000;'>Suchfilter</div></div>
<div style='left:12px;top:111px;width:207px;height:306px;overflow:hidden'><div style='left:5.00px;top:168.00px;transform:scaleX(1.0819);transform-origin:0 0;font-family:&quot;Liberation Sans&quot;,sans-serif;font-size:13.5px;font-weight:bold;letter-spacing:0.6px;color:#000;'>Vorgemerkte Änderungen</div></div>
<div style='left:245.93px;top:116.00px;transform:scaleX(1.0651);transform-origin:0 0;font-family:&quot;Liberation Sans&quot;,sans-serif;font-size:13.5px;font-weight:bold;letter-spacing:0.6px;color:#000;'>S</div>
<div style='left:285.39px;top:116.00px;transform:scaleX(1.1135);transform-origin:0 0;font-family:&quot;Liberation Sans&quot;,sans-serif;font-size:13.5px;font-weight:bold;letter-spacing:0.6px;color:#000;'>Paket</div>
<div style='left:483px;top:113px;width:127px;height:22px;overflow:hidden'><div style='left:2.72px;top:3.00px;transform:scaleX(1.0759);transform-origin:0 0;font-family:&quot;Liberation Sans&quot;,sans-serif;font-size:13.5px;font-weight:bold;letter-spacing:0.6px;color:#000;'>Installierte Version</div></div>
<div style='left:615.53px;top:116.00px;transform:scaleX(1.0696);transform-origin:0 0;font-family:&quot;Liberation Sans&quot;,sans-serif;font-size:13.5px;font-weight:bold;letter-spacing:0.6px;color:#000;'>Neueste Version</div>
<div style='left:744.95px;top:116.00px;transform:scaleX(1.0526);transform-origin:0 0;font-family:&quot;Liberation Sans&quot;,sans-serif;font-size:13.5px;font-weight:bold;letter-spacing:0.6px;color:#000;'>Beschreibung</div>
<div style='left:282px;top:136px;width:199px;height:24px;overflow:hidden'><div style='left:3.83px;top:4.00px;transform:scaleX(1.0652);transform-origin:0 0;font-family:&quot;Liberation Sans&quot;,sans-serif;font-size:13.5px;font-weight:bold;letter-spacing:0.6px;color:#000;'>iceweasel</div></div>
<div style='left:482px;top:136px;width:128px;height:24px;overflow:hidden'><div style='left:3.80px;top:4.00px;transform:scaleX(1.0945);transform-origin:0 0;font-family:&quot;Liberation Sans&quot;,sans-serif;font-size:13.5px;font-weight:bold;letter-spacing:0.6px;color:#000;'>24.5.0esr-1~deb7u1</div></div>
<div style='left:612px;top:136px;width:128px;height:24px;overflow:hidden'><div style='left:4.20px;top:4.00px;transform:scaleX(1.0855);transform-origin:0 0;font-family:&quot;Liberation Sans&quot;,sans-serif;font-size:13.5px;font-weight:bold;letter-spacing:0.6px;color:#000;'>24.7.0esr-1~deb7u1</div></div>
<div style='left:742px;top:136px;width:204px;height:24px;overflow:hidden'><div style='left:4.00px;top:4.00px;transform:scaleX(1.0622);transform-origin:0 0;font-family:&quot;Liberation Sans&quot;,sans-serif;font-size:13.5px;font-weight:bold;letter-spacing:0.6px;color:#000;'>Webbrowser auf Basis von Firefox</div></div>
<div style='left:282px;top:160px;width:199px;height:24px;overflow:hidden'><div style='left:3.83px;top:4.00px;transform:scaleX(1.0695);transform-origin:0 0;font-family:&quot;Liberation Sans&quot;,sans-serif;font-size:13.5px;font-weight:bold;letter-spacing:0.6px;color:#000;'>libmozjs24d</div></div>
<div style='left:482px;top:160px;width:128px;height:24px;overflow:hidden'><div style='left:3.80px;top:4.00px;transform:scaleX(1.0945);transform-origin:0 0;font-family:&quot;Liberation Sans&quot;,sans-serif;font-size:13.5px;font-weight:bold;letter-spacing:0.6px;color:#000;'>24.5.0esr-1~deb7u1</div></div>
<div style='left:612px;top:160px;width:128px;height:24px;overflow:hidden'><div style='left:4.20px;top:4.00px;transform:scaleX(1.0855);transform-origin:0 0;font-family:&quot;Liberation Sans&quot;,sans-serif;font-size:13.5px;font-weight:bold;letter-spacing:0.6px;color:#000;'>24.7.0esr-1~deb7u1</div></div>
<div style='left:742px;top:160px;width:204px;height:24px;overflow:hidden'><div style='left:2.96px;top:4.00px;transform:scaleX(1.0397);transform-origin:0 0;font-family:&quot;Liberation Sans&quot;,sans-serif;font-size:13.5px;font-weight:bold;letter-spacing:0.6px;color:#000;'>Mozilla SpiderMonkey JavaScript library</div></div>
<div style='left:282px;top:184px;width:199px;height:24px;overflow:hidden'><div style='left:3.85px;top:4.00px;transform:scaleX(1.0531);transform-origin:0 0;font-family:&quot;Liberation Sans&quot;,sans-serif;font-size:13.5px;font-weight:bold;letter-spacing:0.6px;color:#000;'>linux-headers-3.2.0-4-686-pae</div></div>
<div style='left:482px;top:184px;width:129px;height:24px;overflow:hidden'><div style='left:2.72px;top:4.00px;transform:scaleX(1.0849);transform-origin:0 0;font-family:&quot;Liberation Sans&quot;,sans-serif;font-size:13.5px;font-weight:bold;letter-spacing:0.6px;color:#000;'>3.2.51-1</div></div>
<div style='left:612px;top:184px;width:128px;height:24px;overflow:hidden'><div style='left:3.10px;top:4.00px;transform:scaleX(1.0991);transform-origin:0 0;font-family:&quot;Liberation Sans&quot;,sans-serif;font-size:13.5px;font-weight:bold;letter-spacing:0.6px;color:#000;'>3.2.60-1+deb7u3</div></div>
<div style='left:742px;top:184px;width:204px;height:24px;overflow:hidden'><div style='left:2.94px;top:4.00px;transform:scaleX(1.0647);transform-origin:0 0;font-family:&quot;Liberation Sans&quot;,sans-serif;font-size:13.5px;font-weight:bold;letter-spacing:0.6px;color:#000;'>Header-Dateien für Linux 3.2.0-4-686-pae</div></div>
<div style='left:282px;top:208px;width:199px;height:24px;overflow:hidden'><div style='left:3.87px;top:4.00px;transform:scaleX(1.0279);transform-origin:0 0;font-family:&quot;Liberation Sans&quot;,sans-serif;font-size:13.5px;font-weight:bold;letter-spacing:0.6px;color:#000;'>linux-headers-3.2.0-4-common</div></div>
<div style='left:482px;top:208px;width:129px;height:24px;overflow:hidden'><div style='left:2.72px;top:4.00px;transform:scaleX(1.0849);transform-origin:0 0;font-family:&quot;Liberation Sans&quot;,sans-serif;font-size:13.5px;font-weight:bold;letter-spacing:0.6px;color:#000;'>3.2.51-1</div></div>
<div style='left:612px;top:208px;width:128px;height:24px;overflow:hidden'><div style='left:3.10px;top:4.00px;transform:scaleX(1.0991);transform-origin:0 0;font-family:&quot;Liberation Sans&quot;,sans-serif;font-size:13.5px;font-weight:bold;letter-spacing:0.6px;color:#000;'>3.2.60-1+deb7u3</div></div>
<div style='left:742px;top:208px;width:204px;height:24px;overflow:hidden'><div style='left:4.00px;top:4.00px;transform:scaleX(1.0598);transform-origin:0 0;font-family:&quot;Liberation Sans&quot;,sans-serif;font-size:13.5px;font-weight:bold;letter-spacing:0.6px;color:#000;'>Gemeinsame Header-Dateien für Linux 3.2</div></div>
<div style='left:282px;top:232px;width:199px;height:24px;overflow:hidden'><div style='left:3.84px;top:4.00px;transform:scaleX(1.0552);transform-origin:0 0;font-family:&quot;Liberation Sans&quot;,sans-serif;font-size:13.5px;font-weight:bold;letter-spacing:0.6px;color:#000;'>linux-image-3.2.0-4-686-pae</div></div>
<div style='left:482px;top:232px;width:129px;height:24px;overflow:hidden'><div style='left:2.72px;top:4.00px;transform:scaleX(1.0849);transform-origin:0 0;font-family:&quot;Liberation Sans&quot;,sans-serif;font-size:13.5px;font-weight:bold;letter-spacing:0.6px;color:#000;'>3.2.51-1</div></div>
<div style='left:612px;top:232px;width:128px;height:24px;overflow:hidden'><div style='left:3.10px;top:4.00px;transform:scaleX(1.0991);transform-origin:0 0;font-family:&quot;Liberation Sans&quot;,sans-serif;font-size:13.5px;font-weight:bold;letter-spacing:0.6px;color:#000;'>3.2.60-1+deb7u3</div></div>
<div style='left:742px;top:232px;width:204px;height:24px;overflow:hidden'><div style='left:2.94px;top:4.00px;transform:scaleX(1.0554);transform-origin:0 0;font-family:&quot;Liberation Sans&quot;,sans-serif;font-size:13.5px;font-weight:bold;letter-spacing:0.6px;color:#000;'>Linux 3.2 für moderne PCs</div></div>
<div style='left:282px;top:256px;width:199px;height:24px;overflow:hidden'><div style='left:3.87px;top:4.00px;transform:scaleX(1.0266);transform-origin:0 0;font-family:&quot;Liberation Sans&quot;,sans-serif;font-size:13.5px;font-weight:bold;letter-spacing:0.6px;color:#000;'>linux-libc-dev</div></div>
<div style='left:482px;top:256px;width:129px;height:24px;overflow:hidden'><div style='left:2.70px;top:4.00px;transform:scaleX(1.0955);transform-origin:0 0;font-family:&quot;Liberation Sans&quot;,sans-serif;font-size:13.5px;font-weight:bold;letter-spacing:0.6px;color:#000;'>3.2.57-3+deb7u2</div></div>
<div style='left:612px;top:256px;width:128px;height:24px;overflow:hidden'><div style='left:3.10px;top:4.00px;transform:scaleX(1.0991);transform-origin:0 0;font-family:&quot;Liberation Sans&quot;,sans-serif;font-size:13.5px;font-weight:bold;letter-spacing:0.6px;color:#000;'>3.2.60-1+deb7u3</div></div>
<div style='left:742px;top:256px;width:204px;height:24px;overflow:hidden'><div style='left:2.94px;top:4.00px;transform:scaleX(1.0597);transform-origin:0 0;font-family:&quot;Liberation Sans&quot;,sans-serif;font-size:13.5px;font-weight:bold;letter-spacing:0.6px;color:#000;'>Linux-Header-Dateien zur Userspace-Entwicklung</div></div>
<div style='left:282px;top:280px;width:199px;height:24px;overflow:hidden'><div style='left:4.90px;top:4.00px;transform:scaleX(1.0280);transform-origin:0 0;font-family:&quot;Liberation Sans&quot;,sans-serif;font-size:13.5px;font-weight:bold;letter-spacing:0.6px;color:#000;'>xulrunner-24.0</div></div>
<div style='left:482px;top:280px;width:128px;height:24px;overflow:hidden'><div style='left:3.80px;top:4.00px;transform:scaleX(1.0945);transform-origin:0 0;font-family:&quot;Liberation Sans&quot;,sans-serif;font-size:13.5px;font-weight:bold;letter-spacing:0.6px;color:#000;'>24.5.0esr-1~deb7u1</div></div>
<div style='left:612px;top:280px;width:128px;height:24px;overflow:hidden'><div style='left:4.20px;top:4.00px;transform:scaleX(1.0855);transform-origin:0 0;font-family:&quot;Liberation Sans&quot;,sans-serif;font-size:13.5px;font-weight:bold;letter-spacing:0.6px;color:#000;'>24.7.0esr-1~deb7u1</div></div>
<div style='left:742px;top:280px;width:204px;height:24px;overflow:hidden'><div style='left:4.00px;top:4.00px;transform:scaleX(1.0348);transform-origin:0 0;font-family:&quot;Liberation Sans&quot;,sans-serif;font-size:13.5px;font-weight:bold;letter-spacing:0.6px;color:#000;'>XUL +  XPCOM application runner</div></div>
<div style='left:253.11px;top:361.00px;transform:scaleX(1.1907);transform-origin:0 0;font-family:&quot;Liberation Sans&quot;,sans-serif;font-size:15.4px;font-weight:normal;-webkit-text-stroke:0.4px currentColor;color:#000;'>Linux 3.2 für moderne PCs</div>
<div style='left:257.45px;top:390.00px;transform:scaleX(1.0549);transform-origin:0 0;font-family:&quot;Liberation Sans&quot;,sans-serif;font-size:13.5px;font-weight:bold;letter-spacing:0.6px;color:#000;'>Bildschirmfoto herunterladen</div>
<div style='left:489.90px;top:390.00px;transform:scaleX(1.0584);transform-origin:0 0;font-family:&quot;Liberation Sans&quot;,sans-serif;font-size:13.5px;font-weight:bold;letter-spacing:0.6px;color:#000;'>Änderungsprotokoll abrufen</div>
<div style='left:253.55px;top:419.00px;transform:scaleX(1.1514);transform-origin:0 0;font-family:&quot;Liberation Sans&quot;,sans-serif;font-size:13px;font-weight:normal;letter-spacing:0.7px;-webkit-text-stroke:0.55px currentColor;color:#000;'>Der Linux-Kernel 3.2 und Module für die Verwendung auf PCs mit einem oder</div>
<div style='left:254.70px;top:441.00px;transform:scaleX(1.1258);transform-origin:0 0;font-family:&quot;Liberation Sans&quot;,sans-serif;font-size:13px;font-weight:normal;letter-spacing:0.7px;-webkit-text-stroke:0.55px currentColor;color:#000;'>mehreren PAE-fähigen Prozessoren.</div>
<div style='left:253.57px;top:485.00px;transform:scaleX(1.1311);transform-origin:0 0;font-family:&quot;Liberation Sans&quot;,sans-serif;font-size:13px;font-weight:normal;letter-spacing:0.7px;-webkit-text-stroke:0.55px currentColor;color:#000;'>Dieser Kernel erfordert PAE (Physical Address Extension).  Diese Fähigkeit</div>
<div style='left:254.70px;top:507.00px;transform:scaleX(1.1219);transform-origin:0 0;font-family:&quot;Liberation Sans&quot;,sans-serif;font-size:13px;font-weight:normal;letter-spacing:0.7px;-webkit-text-stroke:0.55px currentColor;color:#000;'>bieten Intel Pentium Pro/II/III/4/4M/D,  Xeon,  Core and Atom;  AMD Geode NX,</div>
<div style='left:254.70px;top:529.00px;transform:scaleX(1.1081);transform-origin:0 0;font-family:&quot;Liberation Sans&quot;,sans-serif;font-size:13px;font-weight:normal;letter-spacing:0.7px;-webkit-text-stroke:0.55px currentColor;color:#000;'>Athlon (K7),  Duron,  Opteron,  Sempron,  Turion oder Phenom;  Transmeta</div>
<div style='left:253.57px;top:551.00px;transform:scaleX(1.1338);transform-origin:0 0;font-family:&quot;Liberation Sans&quot;,sans-serif;font-size:13px;font-weight:normal;letter-spacing:0.7px;-webkit-text-stroke:0.55px currentColor;color:#000;'>Efficeon;  VIA C7 sowie ein paar weitere Prozessoren.</div>
<div style='left:85.34px;top:443.40px;transform:scaleX(1.0618);transform-origin:0 0;font-family:&quot;Liberation Sans&quot;,sans-serif;font-size:13.5px;font-weight:bold;letter-spacing:0.6px;color:#000;'>Sektionen</div>
<div style='left:98.75px;top:472.00px;transform:scaleX(1.0512);transform-origin:0 0;font-family:&quot;Liberation Sans&quot;,sans-serif;font-size:13.5px;font-weight:bold;letter-spacing:0.6px;color:#000;'>Status</div>
<div style='left:88.33px;top:501.20px;transform:scaleX(1.0651);transform-origin:0 0;font-family:&quot;Liberation Sans&quot;,sans-serif;font-size:13.5px;font-weight:bold;letter-spacing:0.6px;color:#000;'>Ursprung</div>
<div style='left:31.43px;top:530.00px;transform:scaleX(1.0651);transform-origin:0 0;font-family:&quot;Liberation Sans&quot;,sans-serif;font-size:13.5px;font-weight:bold;letter-spacing:0.6px;color:#5e5c60;'>Benutzerdefinierte Filter</div>
<div style='left:63.56px;top:559.00px;transform:scaleX(1.0414);transform-origin:0 0;font-family:&quot;Liberation Sans&quot;,sans-serif;font-size:13.5px;font-weight:bold;letter-spacing:0.6px;color:#000;'>Suchergebnisse</div>
<div style='left:78.20px;top:587.50px;transform:scaleX(1.0360);transform-origin:0 0;font-family:&quot;Liberation Sans&quot;,sans-serif;font-size:13.5px;font-weight:bold;letter-spacing:0.6px;color:#000;'>Architecture</div>
<div style='left:13.00px;top:613.00px;transform:scaleX(1.1135);transform-origin:0 0;font-family:&quot;Liberation Sans&quot;,sans-serif;font-size:13.5px;font-weight:normal;letter-spacing:0.9px;-webkit-text-stroke:0.6px currentColor;color:#000;'>7 Pakete angezeigt, 2417 installiert, 0 defekt, 0 werden installiert oder aktualisiert, 0 werden entfernt</div>
</body></html>
